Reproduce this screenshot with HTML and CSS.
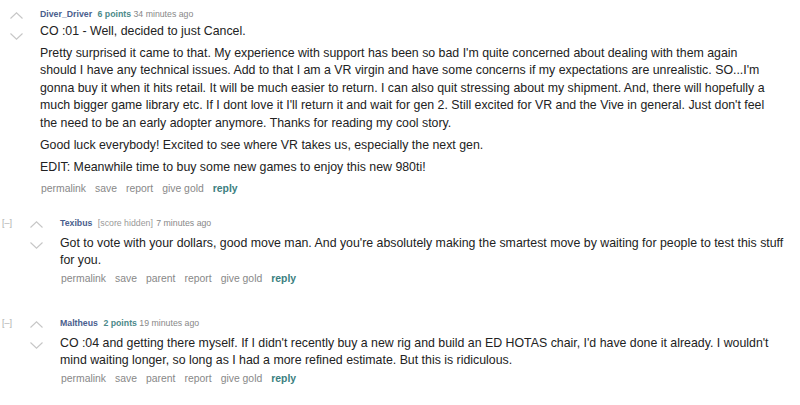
FILE: index.html
```html
<!DOCTYPE html>
<html>
<head>
<meta charset="utf-8">
<link rel="stylesheet" href="styles.css">
</head>
<body>
<div class="comment top">
  <div class="midcol">
    <svg class="arrow up" width="13" height="7" viewBox="0 0 13 7"><polyline points="0.5,6.5 6.5,0.8 12.5,6.5"/></svg>
    <svg class="arrow down" width="13" height="7" viewBox="0 0 13 7"><polyline points="0.5,0.5 6.5,6.2 12.5,0.5"/></svg>
  </div>
  <div class="entry">
    <p class="tagline"><a class="author">Diver_Driver</a> <span class="score">6 points</span> <span class="time">34 minutes ago</span></p>
    <div class="md">
      <p>CO :01 - Well, decided to just Cancel.</p>
      <p>Pretty surprised it came to that. My experience with support has been so bad I'm quite concerned about dealing with them again should I have any technical issues. Add to that I am a VR virgin and have some concerns if my expectations are unrealistic. SO...I'm gonna buy it when it hits retail. It will be much easier to return. I can also quit stressing about my shipment. And, there will hopefully a much bigger game library etc. If I dont love it I'll return it and wait for gen 2. Still excited for VR and the Vive in general. Just don't feel the need to be an early adopter anymore. Thanks for reading my cool story.</p>
      <p>Good luck everybody! Excited to see where VR takes us, especially the next gen.</p>
      <p>EDIT: Meanwhile time to buy some new games to enjoy this new 980ti!</p>
    </div>
    <ul class="buttons">
      <li>permalink</li><li>save</li><li>report</li><li>give gold</li><li class="reply">reply</li>
    </ul>
  </div>
</div>

<div class="comment child first-child">
  <a class="expand">[–]</a>
  <div class="midcol">
    <svg class="arrow up" width="13" height="7" viewBox="0 0 13 7"><polyline points="0.5,6.5 6.5,0.8 12.5,6.5"/></svg>
    <svg class="arrow down" width="13" height="7" viewBox="0 0 13 7"><polyline points="0.5,0.5 6.5,6.2 12.5,0.5"/></svg>
  </div>
  <div class="entry">
    <p class="tagline"><a class="author">Texibus</a> <span class="hidden-score">[score hidden]</span> <span class="time">7 minutes ago</span></p>
    <div class="md">
      <p>Got to vote with your dollars, good move man. And you're absolutely making the smartest move by waiting for people to test this stuff for you.</p>
    </div>
    <ul class="buttons">
      <li>permalink</li><li>save</li><li>parent</li><li>report</li><li>give gold</li><li class="reply">reply</li>
    </ul>
  </div>
</div>

<div class="comment child second-child">
  <a class="expand">[–]</a>
  <div class="midcol">
    <svg class="arrow up" width="13" height="7" viewBox="0 0 13 7"><polyline points="0.5,6.5 6.5,0.8 12.5,6.5"/></svg>
    <svg class="arrow down" width="13" height="7" viewBox="0 0 13 7"><polyline points="0.5,0.5 6.5,6.2 12.5,0.5"/></svg>
  </div>
  <div class="entry">
    <p class="tagline"><a class="author">Maltheus</a> <span class="score">2 points</span> <span class="time">19 minutes ago</span></p>
    <div class="md">
      <p>CO :04 and getting there myself. If I didn't recently buy a new rig and build an ED HOTAS chair, I'd have done it already. I wouldn't mind waiting longer, so long as I had a more refined estimate. But this is ridiculous.</p>
    </div>
    <ul class="buttons">
      <li>permalink</li><li>save</li><li>parent</li><li>report</li><li>give gold</li><li class="reply">reply</li>
    </ul>
  </div>
</div>
</body>
</html>
```

FILE: styles.css
```css
html, body {
  margin: 0;
  padding: 0;
  background: #ffffff;
}

body {
  font-family: "Liberation Sans", Arial, Helvetica, sans-serif;
  color: #222222;
  font-size: 12.35px;
  width: 800px;
  height: 405px;
  overflow: hidden;
}

.comment {
  display: flex;
  align-items: flex-start;
}

.comment.top {
  padding-left: 10px;
  padding-top: 8px;
}

.comment.child {
  padding-left: 2px;
}

.comment.first-child {
  margin-top: 21px;
}

.comment.second-child {
  margin-top: 31px;
}

.expand {
  width: 28px;
  flex: none;
  font-size: 9px;
  color: #b0b0b0;
  line-height: 12px;
  margin-top: 0;
}

.midcol {
  width: 30px;
  flex: none;
  display: flex;
  flex-direction: column;
  align-items: flex-start;
  gap: 14px;
  padding-top: 4px;
}

.arrow {
  display: block;
}

.arrow polyline {
  fill: none;
  stroke: #c6c6c6;
  stroke-width: 1.1;
}

.entry {
  flex: 1;
  min-width: 0;
}

.tagline {
  margin: 0;
  font-size: 8.75px;
  line-height: 12px;
  color: #888888;
}

.author {
  color: #4a5e8d;
  font-weight: bold;
  margin-right: 3px;
}

.score {
  color: #4b8a8a;
  font-weight: bold;
}

.hidden-score {
  color: #999999;
  margin-right: 1px;
}

.md {
  max-width: 735px;
  margin-top: 3px;
}

.child .md {
  margin-top: 6px;
}

.md p {
  margin: 0 0 4.4px 0;
  line-height: 17.5px;
}

.child .md p:last-child {
  margin-bottom: 1.4px;
}

.buttons {
  list-style: none;
  margin: 0;
  padding: 1px 0 0 1px;
  display: flex;
  gap: 9px;
  font-size: 10.4px;
  line-height: 14px;
  color: #888888;
}

.buttons .reply {
  color: #3b8080;
  font-weight: bold;
}
```
